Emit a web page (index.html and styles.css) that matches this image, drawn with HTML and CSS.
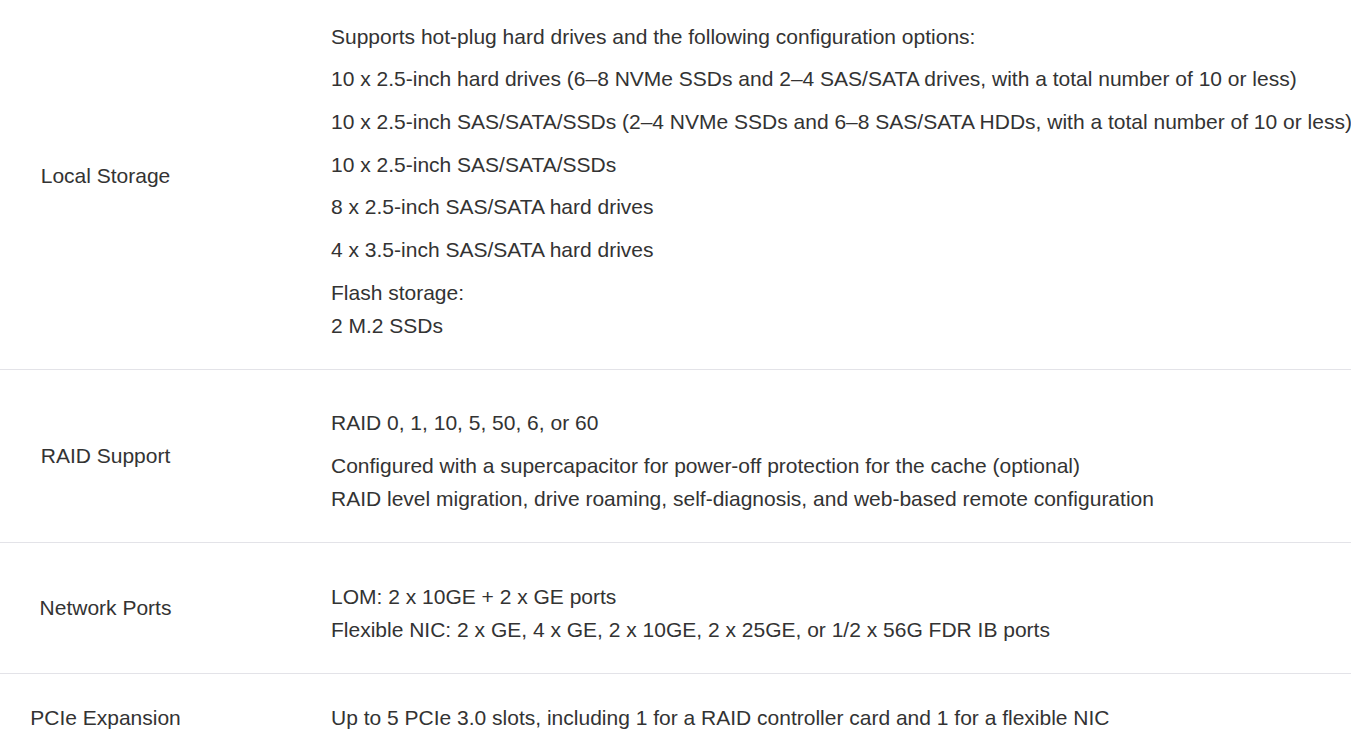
FILE: index.html
```html
<!DOCTYPE html>
<html lang="en">
<head>
<meta charset="utf-8">
<title>Specifications</title>
<link rel="stylesheet" href="styles.css">
</head>
<body>
<div class="spec">
  <div class="row">
    <div class="label">Local Storage</div>
    <div class="value">
      <p>Supports hot-plug hard drives and the following configuration options:</p>
      <p>10 x 2.5-inch hard drives (6–8 NVMe SSDs and 2–4 SAS/SATA drives, with a total number of 10 or less)</p>
      <p>10 x 2.5-inch SAS/SATA/SSDs (2–4 NVMe SSDs and 6–8 SAS/SATA HDDs, with a total number of 10 or less)</p>
      <p>10 x 2.5-inch SAS/SATA/SSDs</p>
      <p>8 x 2.5-inch SAS/SATA hard drives</p>
      <p>4 x 3.5-inch SAS/SATA hard drives</p>
      <p>Flash storage:<br>2 M.2 SSDs</p>
    </div>
  </div>
  <div class="row">
    <div class="label">RAID Support</div>
    <div class="value">
      <p>RAID 0, 1, 10, 5, 50, 6, or 60</p>
      <p>Configured with a supercapacitor for power-off protection for the cache (optional)<br>RAID level migration, drive roaming, self-diagnosis, and web-based remote configuration</p>
    </div>
  </div>
  <div class="row">
    <div class="label">Network Ports</div>
    <div class="value">
      <p>LOM: 2 x 10GE + 2 x GE ports<br>Flexible NIC: 2 x GE, 4 x GE, 2 x 10GE, 2 x 25GE, or 1/2 x 56G FDR IB ports</p>
    </div>
  </div>
  <div class="row">
    <div class="label">PCIe Expansion</div>
    <div class="value">Up to 5 PCIe 3.0 slots, including 1 for a RAID controller card and 1 for a flexible NIC</div>
  </div>
</div>
</body>
</html>
```
FILE: styles.css
```css
html, body {
  margin: 0;
  padding: 0;
  background: #fff;
  overflow: hidden;
}
body {
  font-family: "Liberation Sans", Arial, sans-serif;
  font-size: 21px;
  line-height: 33px;
  color: #333;
}
.spec {
  margin-top: -17px;
}
.row {
  display: grid;
  grid-template-columns: 211px 1fr;
  align-items: center;
  border-bottom: 1px solid #e3e3e8;
}
.label {
  text-align: center;
}
.value {
  padding: 27px 0 27px 120px;
  white-space: nowrap;
}
.value p {
  margin: 9.67px 0 0;
}
```
